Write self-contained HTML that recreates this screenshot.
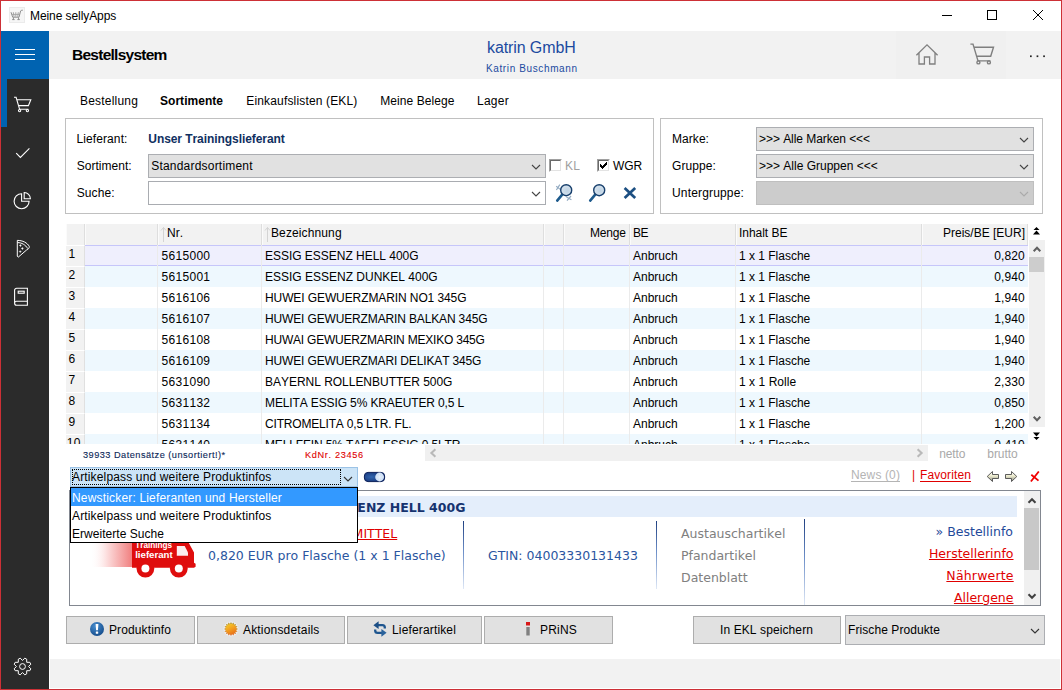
<!DOCTYPE html>
<html lang="de">
<head>
<meta charset="utf-8">
<title>Meine sellyApps</title>
<style>
*{box-sizing:border-box;margin:0;padding:0}
html,body{width:1062px;height:690px;overflow:hidden;background:#fff}
body{font-family:"Liberation Sans",sans-serif;font-size:12px;color:#000;position:relative;font-kerning:none}
#win{position:absolute;left:0;top:0;width:1062px;height:690px;overflow:hidden}
#win div,#win span,#win svg,#win a,#win i,#win b{position:absolute}
#frame{left:0;top:0;width:1062px;height:690px;border:1px solid #cd3036;z-index:50}
.t{white-space:nowrap;line-height:14px;height:14px;font-size:12px}
#side{left:1px;top:31px;width:48px;height:658px;background:#2b2b2b}
#burger{left:1px;top:31px;width:48px;height:48px;background:#0063b1}
#burger i{left:14px;width:20px;height:1px;background:#fff}
#active{left:1px;top:79px;width:6px;height:48px;background:#0063b1}
#head{left:49px;top:31px;width:1012px;height:48px;background:#f2f2f2}
#foot{left:50px;top:659px;width:1010px;height:29px;background:#f2f2f2}
.panel{border:1px solid #c0c0c0;background:#fff}
.sel{background:#e1e1e1;border:1px solid #acaeb2}
.sel.dis{background:#cccccc;border-color:#bfbfbf}
.inp{background:#fff;border:1px solid #a9acb1}
.btn{background:#e1e1e1;border:1px solid #adadad}
.cb{width:13px;height:13px;background:#fff;border-style:solid;border-width:1px;border-color:#a0a0a0 #fff #fff #a0a0a0}
.cb i{left:0;top:0;width:11px;height:11px;border-style:solid;border-width:1px;border-color:#696969 #e3e3e3 #e3e3e3 #696969}
#grid{left:66px;top:224px;width:962px;height:220px;overflow:hidden;background:#fff}
.hc{top:0;height:21px;background:#f2f2f2;border-right:1px solid #dedede;border-left:1px solid #fbfbfb}
.row{left:0;width:962px;height:21px}
.row.b{background:#eef8fe}
.row.s{background:#efeffd;border-top:1px solid #c6c6fa;border-bottom:1px solid #c6c6fa}
.rn{left:0;width:19px;height:21px;background:#f2f2f2;border-right:1px solid #e0e0e0;border-top:1px solid #fff}
.vl{top:21px;width:1px;height:200px;background:#ebebeb}
.c{white-space:nowrap;line-height:21px;height:21px;top:0}
.dv{font-family:"DejaVu Sans","Liberation Sans",sans-serif;font-size:12.5px;white-space:nowrap;line-height:16px;height:16px}
.u{text-decoration:underline}
.dvf{font-family:"DejaVu Sans","Liberation Sans",sans-serif}
</style>
</head>
<body>
<div id="win">
<svg style="left:9px;top:7px" width="16" height="16" viewBox="0 0 16 16">
<rect x="0.5" y="0.5" width="15" height="15" fill="#f6f6f6" stroke="#ebebeb"/>
<path d="M2 5.200l1.700 5h6.300l1.600-6.200q.3-1 2.200-.8" fill="none" stroke="#8e8e8e" stroke-width="1"/>
<path d="M4.300 5.200l.8 4.600M6.800 5.200v4.600M9.300 5.200l-.6 4.600M3 7.400h8" fill="none" stroke="#a0a0a0" stroke-width=".9"/>
<path d="M3.200 12.600h2.400M8.400 12.600h2.400M4.400 10.400v2.200M9.600 10.400v2.200" stroke="#8e8e8e" stroke-width="1" fill="none"/></svg>
<div class="t" style="left:30px;top:8px;line-height:16px;height:16px;letter-spacing:-0.08px">Meine sellyApps</div>
<svg style="left:941px;top:9px" width="110" height="14" viewBox="0 0 110 14" fill="none" stroke="#000" stroke-width="1">
<path d="M1 6.5h10"/><rect x="46.5" y="1.5" width="9" height="9"/><path d="M92 1l10 10M102 1l-10 10"/></svg>
<div id="side"></div><div id="burger"><i style="top:18px"></i><i style="top:23px"></i><i style="top:28px"></i></div><div id="active"></div><div id="head"></div><div id="foot"></div>
<svg style="left:13px;top:95px" width="20" height="18" viewBox="0 0 20 18" fill="none" stroke="#fff" stroke-width="1.100">
<path d="M1 2.300h2.100l3.500 12h8.800M4.300 4.700h13.500l-2.400 5.900H6"/><circle cx="6.600" cy="15.600" r="1.150"/><circle cx="14.400" cy="15.600" r="1.150"/></svg>
<svg style="left:15px;top:146px" width="16" height="14" viewBox="0 0 16 14" fill="none" stroke="#fff" stroke-width="1.1"><path d="M1.2 7.2l4.2 4.2L14.4 2.4"/></svg>
<svg style="left:13px;top:191px" width="19" height="19" viewBox="0 0 19 19" fill="none" stroke="#fff" stroke-width="1.100">
<path d="M8.600 2.700A7.500 7.500 0 1 0 16.100 10.200H8.600z"/><path d="M11.200 1.500v6.200h6.200A6.200 6.200 0 0 0 11.200 1.500z"/></svg>
<svg style="left:15px;top:239px" width="16" height="20" viewBox="0 0 16 20" fill="none" stroke="#fff" stroke-width="1" stroke-linejoin="round">
<path d="M2.300 1.400C7.500 1.300 12.400 3.800 14.300 7.500C14.500 9 13.200 10.400 11.700 10.900L3.200 18.200L2.300 17.200z"/><path d="M2.500 3.600C6.600 3.600 10.600 5.800 12.700 9.600"/>
<path d="M5.400 5.600l.9.900-.9.900-.9-.9zM7.400 8.600l.9.900-.9.900-.9-.9zM5.200 11.700l.9.900-.9.900-.9-.9z" fill="#fff" stroke-width=".5"/></svg>
<svg style="left:13px;top:287px" width="17" height="20" viewBox="0 0 17 20" fill="none" stroke="#fff" stroke-width="1.1">
<path d="M1.6 16.2V3.2a2 2 0 0 1 2-2h10.8v13H3.6a2 2 0 0 0 0 4h10.8v-4"/><rect x="5.2" y="4.2" width="6" height="2"/></svg>
<svg style="left:13px;top:656.800px" width="19" height="19" viewBox="-9.500 -9.500 19 19" fill="none" stroke="#fff" stroke-width="1" stroke-linejoin="round"><circle r="2.900"/><path d="M-4.2 -7.3L-2.3 -8.3L0.0 -6.1L2.3 -8.3L4.2 -7.3L4.2 -4.2L7.3 -4.2L8.3 -2.3L6.1 -0.0L8.3 2.3L7.3 4.2L4.2 4.2L4.2 7.3L2.3 8.3L0.0 6.1L-2.3 8.3L-4.2 7.3L-4.2 4.2L-7.3 4.2L-8.3 2.3L-6.1 0.0L-8.3 -2.3L-7.3 -4.2L-4.2 -4.2z"/></svg>
<div style="left:896px;top:31px;width:110px;height:48px;background:#f0f0f0"></div>
<div class="t" style="left:72px;top:45px;font-size:15.5px;line-height:20px;height:20px;font-weight:bold;letter-spacing:-0.74px">Bestellsystem</div>
<div class="t" style="left:487px;top:38px;font-size:16px;line-height:20px;height:20px;color:#1c4aa0;letter-spacing:-0.1px">katrin GmbH</div>
<div class="t" style="left:486px;top:62px;font-size:10px;color:#1c4aa0;letter-spacing:0.62px">Katrin Buschmann</div>
<svg style="left:914px;top:42px" width="26" height="24" viewBox="0 0 26 24" fill="none" stroke="#7f7f7f" stroke-width="1.3">
<path d="M2.4 13.2L13 2.8l10.6 10.4M5 11v11h5.4v-7h5.2v7H21V11"/></svg>
<svg style="left:969px;top:42px" width="27" height="24" viewBox="0 0 27 24" fill="none" stroke="#7f7f7f" stroke-width="1.400">
<path d="M1.400 2.100h2.600l5 16.800h12.400M5.200 5.200h19.300l-2.800 9H7.800"/><circle cx="9.400" cy="20.400" r="1.500"/><circle cx="19.900" cy="20.400" r="1.500"/></svg>
<svg style="left:1029px;top:54px" width="18" height="4" viewBox="0 0 18 4" fill="#222">
<rect x="1" y="1.4" width="1.7" height="1.7"/><rect x="7.6" y="1.4" width="1.7" height="1.7"/><rect x="14.2" y="1.4" width="1.7" height="1.7"/></svg>
<div class="t" style="left:80px;top:94px;letter-spacing:0.196px">Bestellung</div>
<div class="t" style="left:160px;top:94px;font-weight:bold;letter-spacing:0.032px">Sortimente</div>
<div class="t" style="left:246.3px;top:94px;letter-spacing:0.158px">Einkaufslisten (EKL)</div>
<div class="t" style="left:380.3px;top:94px;letter-spacing:0.076px">Meine Belege</div>
<div class="t" style="left:477px;top:94px;letter-spacing:0.262px">Lager</div>
<div class="panel" style="left:65px;top:118px;width:589px;height:96px;"></div>
<div class="t" style="left:76.5px;top:132px;letter-spacing:0.097px">Lieferant:</div>
<div class="t" style="left:148.3px;top:132px;font-weight:bold;color:#10305f;letter-spacing:-0.068px">Unser Trainingslieferant</div>
<div class="t" style="left:76.7px;top:159px;letter-spacing:0.031px">Sortiment:</div>
<div class="t" style="left:76.7px;top:186px;letter-spacing:0.107px">Suche:</div>
<div class="sel" style="left:148px;top:154px;width:398px;height:24px;"></div>
<div class="t" style="left:151.2px;top:159px;letter-spacing:0.209px">Standardsortiment</div>
<svg style="left:531.0px;top:163.5px" width="10" height="6" viewBox="-1 -1 10 6" fill="none" stroke="#444" stroke-width="1.1"><path d="M0 0L4.0 4L8 0"/></svg>
<div class="inp" style="left:148px;top:181px;width:398px;height:24px;"></div>
<svg style="left:531.0px;top:190.5px" width="10" height="6" viewBox="-1 -1 10 6" fill="none" stroke="#444" stroke-width="1.1"><path d="M0 0L4.0 4L8 0"/></svg>
<div class="cb" style="left:549px;top:159px"><i></i></div>
<div class="t" style="left:565px;top:159px;color:#a0a0a0;letter-spacing:0.161px">KL</div>
<div class="cb" style="left:597px;top:159px"><i></i><svg style="left:2px;top:2px" width="7" height="7" viewBox="0 0 7 7" fill="#000" shape-rendering="crispEdges"><path d="M0 2h1v1h1v1h1v-1h1v-1h1v-1h1v-1h1v3h-1v1h-1v1h-1v1h-1v1h-1v-1h-1v-1h-1z"/></svg></div>
<div class="t" style="left:613px;top:159px;letter-spacing:-0.109px">WGR</div>
<svg style="left:553.500px;top:182px" width="20" height="22" viewBox="0 0 20 22">
<defs><radialGradient id="ln" cx=".6" cy=".55" r=".7"><stop offset="0" stop-color="#bfd3e4"/><stop offset="1" stop-color="#dde7f0"/></radialGradient></defs>
<path d="M2.200 4.200l4 3.200M5.800 2.600l-3.400 5.400M12.400 15l5 2.800M17 14l-4 4.600" stroke="#93abc2" stroke-width="1.200" fill="none"/>
<path d="M3.200 18.600l5-6" stroke="#1d5a8c" stroke-width="2.600" stroke-linecap="round"/>
<circle cx="12.200" cy="8.200" r="5.500" fill="url(#ln)" stroke="#173f6c" stroke-width="1.400"/></svg>
<svg style="left:586.700px;top:182px" width="20" height="22" viewBox="0 0 20 22">
<path d="M3.200 18.600l5-6" stroke="#1d5a8c" stroke-width="2.600" stroke-linecap="round"/>
<circle cx="12.200" cy="8.200" r="5.500" fill="url(#ln)" stroke="#173f6c" stroke-width="1.400"/></svg>
<svg style="left:622px;top:186px" width="16" height="14" viewBox="0 0 16 14"><path d="M2.600 2l10.600 10M13.200 2L2.600 12" stroke="#1c4f82" stroke-width="2.700" fill="none"/></svg>
<div class="panel" style="left:660px;top:118px;width:383px;height:96px;"></div>
<div class="t" style="left:672px;top:132px;letter-spacing:0.054px">Marke:</div>
<div class="t" style="left:672px;top:159px;letter-spacing:0.092px">Gruppe:</div>
<div class="t" style="left:672px;top:186px;letter-spacing:0.163px">Untergruppe:</div>
<div class="sel" style="left:756px;top:127px;width:278px;height:24px;"></div>
<div class="sel" style="left:756px;top:154px;width:278px;height:24px;"></div>
<div class="sel dis" style="left:756px;top:181px;width:278px;height:24px;"></div>
<div class="t" style="left:759px;top:132px;letter-spacing:-0.056px">&gt;&gt;&gt; Alle Marken &lt;&lt;&lt;</div>
<div class="t" style="left:759px;top:159px;letter-spacing:-0.003px">&gt;&gt;&gt; Alle Gruppen &lt;&lt;&lt;</div>
<svg style="left:1019.0px;top:136.7px" width="10" height="6" viewBox="-1 -1 10 6" fill="none" stroke="#444" stroke-width="1.1"><path d="M0 0L4.0 4L8 0"/></svg>
<svg style="left:1019.0px;top:163.7px" width="10" height="6" viewBox="-1 -1 10 6" fill="none" stroke="#444" stroke-width="1.1"><path d="M0 0L4.0 4L8 0"/></svg>
<svg style="left:1019.0px;top:190.7px" width="10" height="6" viewBox="-1 -1 10 6" fill="none" stroke="#aaa" stroke-width="1.1"><path d="M0 0L4.0 4L8 0"/></svg>
<div id="grid"><div class="hc" style="left:0px;width:19px"></div><div class="hc" style="left:19px;width:73px"></div><div class="hc" style="left:92px;width:104px"></div><div class="hc" style="left:196px;width:282px"></div><div class="hc" style="left:478px;width:20px"></div><div class="hc" style="left:498px;width:66px"></div><div class="hc" style="left:564px;width:106px"></div><div class="hc" style="left:670px;width:186px"></div><div class="hc" style="left:856px;width:106px"></div>
<svg style="left:94px;top:2px" width="7" height="17" viewBox="0 0 7 17" fill="none" stroke="#d4d4d4"><path d="M3.5 16V1.5M1 4.5l2.5-3 2.5 3" /></svg>
<svg style="left:198px;top:2px" width="7" height="17" viewBox="0 0 7 17" fill="none" stroke="#d4d4d4"><path d="M3.5 16V1.5M1 4.5l2.5-3 2.5 3" /></svg>
<div class="t" style="left:101px;top:2px;letter-spacing:0.001px">Nr.</div>
<div class="t" style="left:205px;top:2px;letter-spacing:0.119px">Bezeichnung</div>
<div class="t" style="right:402.18px;top:2px;letter-spacing:-0.178px">Menge</div>
<div class="t" style="left:567px;top:2px;letter-spacing:-0.504px">BE</div>
<div class="t" style="left:673px;top:2px;letter-spacing:-0.033px">Inhalt BE</div>
<div class="t" style="right:3.00px;top:2px;letter-spacing:-0.001px">Preis/BE [EUR]</div>
<div class="row s" style="top:21px"></div>
<div class="rn" style="top:21px"></div>
<div class="t" style="left:2.5px;top:23px;letter-spacing:0.326px">1</div>
<div class="t" style="left:95.6px;top:25px;letter-spacing:0.283px">5615000</div>
<div class="t" style="left:199px;top:25px;letter-spacing:-0.026px">ESSIG ESSENZ HELL 400G</div>
<div class="t" style="left:567px;top:25px;letter-spacing:0.001px">Anbruch</div>
<div class="t" style="left:673px;top:25px;letter-spacing:-0.013px">1 x 1 Flasche</div>
<div class="t" style="right:3.33px;top:25px;letter-spacing:0.074px">0,820</div>
<div class="row b" style="top:42px"></div>
<div class="rn" style="top:42px"></div>
<div class="t" style="left:2.5px;top:44px;letter-spacing:0.326px">2</div>
<div class="t" style="left:95.6px;top:46px;letter-spacing:0.283px">5615001</div>
<div class="t" style="left:199px;top:46px;letter-spacing:-0.001px">ESSIG ESSENZ DUNKEL 400G</div>
<div class="t" style="left:567px;top:46px;letter-spacing:0.001px">Anbruch</div>
<div class="t" style="left:673px;top:46px;letter-spacing:-0.013px">1 x 1 Flasche</div>
<div class="t" style="right:3.33px;top:46px;letter-spacing:0.074px">0,940</div>
<div class="row" style="top:63px"></div>
<div class="rn" style="top:63px"></div>
<div class="t" style="left:2.5px;top:65px;letter-spacing:0.326px">3</div>
<div class="t" style="left:95.6px;top:67px;letter-spacing:0.283px">5616106</div>
<div class="t" style="left:199px;top:67px;letter-spacing:-0.097px">HUWEI GEWUERZMARIN NO1 345G</div>
<div class="t" style="left:567px;top:67px;letter-spacing:0.001px">Anbruch</div>
<div class="t" style="left:673px;top:67px;letter-spacing:-0.013px">1 x 1 Flasche</div>
<div class="t" style="right:3.33px;top:67px;letter-spacing:0.074px">1,940</div>
<div class="row b" style="top:84px"></div>
<div class="rn" style="top:84px"></div>
<div class="t" style="left:2.5px;top:86px;letter-spacing:0.326px">4</div>
<div class="t" style="left:95.6px;top:88px;letter-spacing:0.283px">5616107</div>
<div class="t" style="left:199px;top:88px;letter-spacing:-0.144px">HUWEI GEWUERZMARIN BALKAN 345G</div>
<div class="t" style="left:567px;top:88px;letter-spacing:0.001px">Anbruch</div>
<div class="t" style="left:673px;top:88px;letter-spacing:-0.013px">1 x 1 Flasche</div>
<div class="t" style="right:3.33px;top:88px;letter-spacing:0.074px">1,940</div>
<div class="row" style="top:105px"></div>
<div class="rn" style="top:105px"></div>
<div class="t" style="left:2.5px;top:107px;letter-spacing:0.326px">5</div>
<div class="t" style="left:95.6px;top:109px;letter-spacing:0.283px">5616108</div>
<div class="t" style="left:199px;top:109px;letter-spacing:-0.211px">HUWAI GEWUERZMARIN MEXIKO 345G</div>
<div class="t" style="left:567px;top:109px;letter-spacing:0.001px">Anbruch</div>
<div class="t" style="left:673px;top:109px;letter-spacing:-0.013px">1 x 1 Flasche</div>
<div class="t" style="right:3.33px;top:109px;letter-spacing:0.074px">1,940</div>
<div class="row b" style="top:126px"></div>
<div class="rn" style="top:126px"></div>
<div class="t" style="left:2.5px;top:128px;letter-spacing:0.326px">6</div>
<div class="t" style="left:95.6px;top:130px;letter-spacing:0.283px">5616109</div>
<div class="t" style="left:199px;top:130px;letter-spacing:-0.147px">HUWEI GEWUERZMARI DELIKAT 345G</div>
<div class="t" style="left:567px;top:130px;letter-spacing:0.001px">Anbruch</div>
<div class="t" style="left:673px;top:130px;letter-spacing:-0.013px">1 x 1 Flasche</div>
<div class="t" style="right:3.33px;top:130px;letter-spacing:0.074px">1,940</div>
<div class="row" style="top:147px"></div>
<div class="rn" style="top:147px"></div>
<div class="t" style="left:2.5px;top:149px;letter-spacing:0.326px">7</div>
<div class="t" style="left:95.6px;top:151px;letter-spacing:0.283px">5631090</div>
<div class="t" style="left:199px;top:151px;letter-spacing:-0.026px">BAYERNL ROLLENBUTTER 500G</div>
<div class="t" style="left:567px;top:151px;letter-spacing:0.001px">Anbruch</div>
<div class="t" style="left:673px;top:151px;letter-spacing:0.046px">1 x 1 Rolle</div>
<div class="t" style="right:3.33px;top:151px;letter-spacing:0.074px">2,330</div>
<div class="row b" style="top:168px"></div>
<div class="rn" style="top:168px"></div>
<div class="t" style="left:2.5px;top:170px;letter-spacing:0.326px">8</div>
<div class="t" style="left:95.6px;top:172px;letter-spacing:0.283px">5631132</div>
<div class="t" style="left:199px;top:172px;letter-spacing:-0.121px">MELITA ESSIG 5% KRAEUTER 0,5 L</div>
<div class="t" style="left:567px;top:172px;letter-spacing:0.001px">Anbruch</div>
<div class="t" style="left:673px;top:172px;letter-spacing:-0.013px">1 x 1 Flasche</div>
<div class="t" style="right:3.33px;top:172px;letter-spacing:0.074px">0,850</div>
<div class="row" style="top:189px"></div>
<div class="rn" style="top:189px"></div>
<div class="t" style="left:2.5px;top:191px;letter-spacing:0.326px">9</div>
<div class="t" style="left:95.6px;top:193px;letter-spacing:0.283px">5631134</div>
<div class="t" style="left:199px;top:193px;letter-spacing:-0.183px">CITROMELITA 0,5 LTR. FL.</div>
<div class="t" style="left:567px;top:193px;letter-spacing:0.001px">Anbruch</div>
<div class="t" style="left:673px;top:193px;letter-spacing:-0.013px">1 x 1 Flasche</div>
<div class="t" style="right:3.33px;top:193px;letter-spacing:0.074px">1,200</div>
<div class="row b" style="top:210px"></div>
<div class="rn" style="top:210px"></div>
<div class="t" style="left:0.8px;top:212px;letter-spacing:0.326px">10</div>
<div class="t" style="left:95.6px;top:214px;letter-spacing:0.283px">5631140</div>
<div class="t" style="left:199px;top:214px;letter-spacing:-0.141px">MELLFEIN 5% TAFELESSIG 0,5LTR</div>
<div class="t" style="left:567px;top:214px;letter-spacing:0.001px">Anbruch</div>
<div class="t" style="left:673px;top:214px;letter-spacing:-0.013px">1 x 1 Flasche</div>
<div class="t" style="right:3.33px;top:214px;letter-spacing:0.074px">0,410</div>
<div class="vl" style="left:91px"></div>
<div class="vl" style="left:195px"></div>
<div class="vl" style="left:477px"></div>
<div class="vl" style="left:497px"></div>
<div class="vl" style="left:563px"></div>
<div class="vl" style="left:669px"></div>
<div class="vl" style="left:855px"></div>
</div>
<svg style="left:1033px;top:227px" width="7" height="8" viewBox="0 0 7 8" fill="#000"><path d="M3.5 0L6.5 3H.5zM3.5 3.6L7 7.4H0z"/></svg>
<div style="left:1029px;top:240px;width:16px;height:187px;background:#f0f0f0"></div>
<div style="left:1029px;top:257px;width:15px;height:15px;background:#cdcdcd"></div>
<svg style="left:1031.600px;top:245px" width="10" height="8" viewBox="0 0 10 8" fill="none" stroke="#606060" stroke-width="2"><path d="M1.700 6.200l3.300-3.500 3.300 3.500"/></svg>
<svg style="left:1031.600px;top:415px" width="10" height="8" viewBox="0 0 10 8" fill="none" stroke="#606060" stroke-width="2"><path d="M1.700 1.800l3.300 3.500 3.300-3.500"/></svg>
<svg style="left:1033px;top:432px" width="7" height="8" viewBox="0 0 7 8" fill="#000"><path d="M0 .6h7L3.5 4.4zM.5 5h6L3.5 8z"/></svg>
<div class="t" style="left:83px;top:449px;font-size:9.2px;line-height:12px;height:12px;color:#0c2858;letter-spacing:0.482px;-webkit-text-stroke:.12px #0c2858">39933 Datensätze (unsortiert!)*</div>
<div class="t" style="left:305px;top:449px;font-size:9.2px;line-height:12px;height:12px;color:#e00000;letter-spacing:0.649px;-webkit-text-stroke:.1px #e00000">KdNr. 23456</div>
<div style="left:425px;top:445px;width:503px;height:16px;background:#f0f0f0"></div>
<svg style="left:429px;top:448px" width="8" height="10" viewBox="0 0 8 10" fill="none" stroke="#b9b9b9" stroke-width="2.1"><path d="M6.4 1.2l-4 3.800 4 3.800"/></svg>
<svg style="left:916px;top:448px" width="8" height="10" viewBox="0 0 8 10" fill="none" stroke="#b9b9b9" stroke-width="2.1"><path d="M1.6 1.2l4 3.800-4 3.800"/></svg>
<div class="t" style="left:939.3px;top:447px;color:#a9a9a9;letter-spacing:-0.138px">netto</div>
<div class="t" style="left:987.3px;top:447px;color:#a9a9a9;letter-spacing:-0.048px">brutto</div>
<div style="left:70px;top:467px;width:288px;height:20px;background:#cce4f7;border:1px solid #9cc3e6"></div>
<div style="left:72px;top:469px;width:269px;height:16px;border:1px dotted #000"></div>
<div class="t" style="left:72px;top:470px;letter-spacing:0.15px">Artikelpass und weitere Produktinfos</div>
<svg style="left:343.0px;top:475.5px" width="10" height="6" viewBox="-1 -1 10 6" fill="none" stroke="#333" stroke-width="1.1"><path d="M0 0L4.0 4L8 0"/></svg>
<svg style="left:363px;top:471px" width="23" height="12" viewBox="0 0 23 12">
<defs><radialGradient id="tg" cx=".35" cy=".5" r=".6"><stop offset="0" stop-color="#3165ae"/><stop offset="1" stop-color="#17357a"/></radialGradient></defs>
<rect x="1.400" y="1.400" width="20.200" height="9.200" rx="3.600" fill="url(#tg)" stroke="#0b1f58" stroke-width="1"/>
<circle cx="16.600" cy="6" r="4.400" fill="#cfe0f6"/>
<path d="M16.600 2v8M12.800 6h7.600M14 3.300l5.200 5.400M19.200 3.300L14 8.700" stroke="#e6effb" stroke-width=".7"/></svg>
<div class="t" style="left:851px;top:468px;color:#b4b4b4;letter-spacing:0.124px;text-decoration:underline;text-underline-offset:2px">News (0)</div>
<div class="t" style="left:912px;top:468px;color:#e00000;letter-spacing:-0.117px">|</div>
<div class="t" style="left:920px;top:468px;color:#e00000;letter-spacing:0.109px;text-decoration:underline;text-underline-offset:2px">Favoriten</div>
<svg style="left:986px;top:470px" width="32" height="13" viewBox="0 0 32 13" stroke="#4c4c4c" stroke-width=".9">
<defs><linearGradient id="ar" x1="0" y1="0" x2="0" y2="1"><stop offset="0" stop-color="#fff"/><stop offset=".45" stop-color="#ecebcd"/><stop offset="1" stop-color="#8c8c84"/></linearGradient></defs>
<path d="M1.200 6.500L6.500 1.500v3h6v4h-6v3z" fill="url(#ar)"/><path d="M30.800 6.500L25.500 1.500v3h-6v4h6v3z" fill="url(#ar)"/></svg>
<svg style="left:1029px;top:471px" width="12" height="12" viewBox="0 0 12 12"><path d="M1.900 10.500L9.800.5M2.300 3.700l7.200 5.900" stroke="#f00000" stroke-width="1.800" fill="none"/></svg>
<div style="left:69px;top:490px;width:972px;height:116px;border:1px solid #828790;background:#fff"></div>
<div style="left:70px;top:496px;width:947px;height:21px;background:#e4eefb"></div>
<div class="t dvf" style="left:285px;top:500px;font-size:12.5px;line-height:16px;height:16px;font-weight:bold;color:#16336f">ESSIG ESSENZ HELL 400G</div>
<div class="t dvf" style="left:304px;top:526px;font-size:12.5px;line-height:16px;height:16px;color:#e00000;text-decoration:underline">LEBENSMITTEL</div>
<div class="t dvf" style="left:208px;top:548px;font-size:12.5px;line-height:16px;height:16px;color:#2a55a0">0,820 EUR pro Flasche (1 x 1 Flasche)</div>
<div class="t dvf" style="left:488px;top:548px;font-size:12.5px;line-height:16px;height:16px;color:#2a55a0">GTIN: 04003330131433</div>
<div class="t dvf" style="left:681px;top:526px;font-size:12.5px;line-height:16px;height:16px;color:#808080">Austauschartikel</div>
<div class="t dvf" style="left:681px;top:548px;font-size:12.5px;line-height:16px;height:16px;color:#808080">Pfandartikel</div>
<div class="t dvf" style="left:681px;top:570px;font-size:12.5px;line-height:16px;height:16px;color:#808080">Datenblatt</div>
<div class="t dvf" style="right:49px;top:524px;font-size:12.5px;line-height:16px;height:16px;color:#1f4a9a">» Bestellinfo</div>
<div class="t dvf" style="right:48.5px;top:546px;font-size:12.5px;line-height:16px;height:16px;color:#e00000;text-decoration:underline">Herstellerinfo</div>
<div class="t dvf" style="right:48.32px;top:568px;font-size:12.5px;line-height:16px;height:16px;color:#e00000;letter-spacing:0.178px;text-decoration:underline">Nährwerte</div>
<div class="t dvf" style="right:48.5px;top:590px;font-size:12.5px;line-height:16px;height:16px;color:#e00000;text-decoration:underline">Allergene</div>
<div style="left:463px;top:521px;width:1px;height:68px;background:linear-gradient(#1f3f80,#6d8fc8 45%,#dfe8f6)"></div>
<div style="left:656px;top:521px;width:1px;height:68px;background:linear-gradient(#1f3f80,#6d8fc8 45%,#dfe8f6)"></div>
<div style="left:804px;top:519px;width:1px;height:86px;background:linear-gradient(#1f3f80,#6d8fc8 45%,#dfe8f6)"></div>
<svg style="left:84px;top:520px" width="114" height="58" viewBox="0 0 114 58">
<defs><linearGradient id="tr" x1="0" y1="0" x2="1" y2="0"><stop offset="0" stop-color="#fff" stop-opacity="0"/><stop offset=".35" stop-color="#fde4e4"/><stop offset="1" stop-color="#f07c7c"/></linearGradient></defs>
<rect x="6" y="12" width="43" height="35" fill="url(#tr)"/>
<path d="M48 6h42.500v15.500h13.500l6 11v10.200l1.600 1v3l-1.600 1H48z" fill="#df0d0d"/>
<circle cx="61.400" cy="48.600" r="8.900" fill="#df0d0d"/><circle cx="94.800" cy="48.600" r="8.900" fill="#df0d0d"/>
<circle cx="61.400" cy="48.600" r="4" fill="#fff"/><circle cx="94.800" cy="48.600" r="4" fill="#fff"/>
<path d="M92.800 25.900h7.900l3.300 6.600v3.300H92.800z" fill="#fbeeee"/>
<text x="51.200" y="27.600" font-family="Liberation Sans,sans-serif" font-size="8.600" font-weight="bold" fill="#fff" textLength="37" lengthAdjust="spacingAndGlyphs">Trainings</text>
<text x="51.200" y="37.700" font-family="Liberation Sans,sans-serif" font-size="9" font-weight="bold" fill="#fff" textLength="37.500" lengthAdjust="spacingAndGlyphs">lieferant</text></svg>
<div style="left:1024px;top:491px;width:16px;height:114px;background:#f0f0f0"></div>
<div style="left:1024px;top:508px;width:15px;height:62px;background:#c8c8c8"></div>
<svg style="left:1027px;top:496.5px" width="10" height="7" viewBox="0 0 10 7" fill="none" stroke="#404040" stroke-width="2"><path d="M1.500 5.800l3.500-3.600 3.500 3.600"/></svg>
<svg style="left:1027px;top:593px" width="10" height="7" viewBox="0 0 10 7" fill="none" stroke="#404040" stroke-width="2"><path d="M1.500 1.200l3.500 3.600 3.500-3.600"/></svg>
<div class="btn" style="left:66px;top:616px;width:129px;height:28px;"></div>
<div class="btn" style="left:197px;top:616px;width:148px;height:28px;"></div>
<div class="btn" style="left:347px;top:616px;width:135px;height:28px;"></div>
<div class="btn" style="left:484px;top:616px;width:129px;height:28px;"></div>
<div class="btn" style="left:693px;top:616px;width:148px;height:28px;"></div>
<div class="sel" style="left:845px;top:615px;width:200px;height:30px;"></div>
<svg style="left:89px;top:621px" width="16" height="16" viewBox="0 0 16 16">
<defs><radialGradient id="bi" cx=".4" cy=".3" r=".8"><stop offset="0" stop-color="#4a8fd0"/><stop offset="1" stop-color="#0f4584"/></radialGradient></defs>
<circle cx="8" cy="8" r="7" fill="url(#bi)"/><path d="M6.600 3h2.800l-.5 6.200H7.100z" fill="#fff"/><rect x="6.800" y="10.400" width="2.400" height="2.400" rx=".6" fill="#fff"/></svg>
<div class="t" style="left:109px;top:623px;letter-spacing:0.118px">Produktinfo</div>
<svg style="left:223px;top:621px" width="16" height="16" viewBox="-8 -8 16 16">
<defs><linearGradient id="sp" x1="0" y1="0" x2="0" y2="1"><stop offset="0" stop-color="#a88a0c"/><stop offset=".5" stop-color="#d08a14"/><stop offset="1" stop-color="#e2560c"/></linearGradient>
<linearGradient id="su" x1=".2" y1="0" x2=".7" y2="1"><stop offset="0" stop-color="#f4cc2a"/><stop offset=".5" stop-color="#f3a020"/><stop offset="1" stop-color="#e8701a"/></linearGradient></defs>
<circle r="7.600" fill="#f4f4f4" opacity=".6"/><path d="M0.00 -7.10L0.98 -4.90L2.72 -6.56L2.78 -4.16L5.02 -5.02L4.16 -2.78L6.56 -2.72L4.90 -0.98L7.10 -0.00L4.90 0.98L6.56 2.72L4.16 2.78L5.02 5.02L2.78 4.16L2.72 6.56L0.98 4.90L0.00 7.10L-0.98 4.90L-2.72 6.56L-2.78 4.16L-5.02 5.02L-4.16 2.78L-6.56 2.72L-4.90 0.98L-7.10 0.00L-4.90 -0.98L-6.56 -2.72L-4.16 -2.78L-5.02 -5.02L-2.78 -4.16L-2.72 -6.56L-0.98 -4.90z" fill="url(#sp)"/><circle r="5.300" fill="url(#su)"/></svg>
<div class="t" style="left:243px;top:623px;letter-spacing:0.176px">Aktionsdetails</div>
<svg style="left:373px;top:620.5px" width="14" height="16" viewBox="0 0 14 16" fill="none" stroke="#1f568f" stroke-width="2.3">
<path d="M4.500 4.200H9.400a2.400 2.400 0 0 1 2.400 2.400V7.400"/><path d="M9.500 11.800H4.600a2.400 2.400 0 0 1-2.400-2.400V8.600"/>
<path d="M.4 4.200L5.600.3V8.100z" fill="#1c4f86" stroke="none"/><path d="M13.600 11.800L8.400 7.900v7.800z" fill="#2a639c" stroke="none"/></svg>
<div class="t" style="left:392px;top:623px;letter-spacing:0.152px">Lieferartikel</div>
<svg style="left:525px;top:621px" width="6" height="16" viewBox="0 0 6 16"><rect x="1" y="1" width="4" height="3.500" fill="#d81818"/><rect x="1.300" y="6" width="3.400" height="8.500" fill="#808080"/></svg>
<div class="t" style="left:540px;top:623px;letter-spacing:0.199px">PRiNS</div>
<div class="t" style="left:720px;top:623px;letter-spacing:0.101px">In EKL speichern</div>
<div class="t" style="left:848px;top:623px;letter-spacing:0.081px">Frische Produkte</div>
<svg style="left:1030.0px;top:627.7px" width="10" height="6" viewBox="-1 -1 10 6" fill="none" stroke="#333" stroke-width="1.1"><path d="M0 0L4.0 4L8 0"/></svg>
<div style="left:70px;top:487px;width:288px;height:56px;background:#fff;border:1px solid #000"></div>
<div style="left:71px;top:488px;width:286px;height:18px;background:#3399ff"></div>
<div class="t" style="left:72px;top:491px;color:#fff;letter-spacing:0.173px">Newsticker: Lieferanten und Hersteller</div>
<div class="t" style="left:72px;top:509px;letter-spacing:0.15px">Artikelpass und weitere Produktinfos</div>
<div class="t" style="left:72px;top:527px;letter-spacing:0.039px">Erweiterte Suche</div>
<div id="frame"></div>
</div>
</body>
</html>
